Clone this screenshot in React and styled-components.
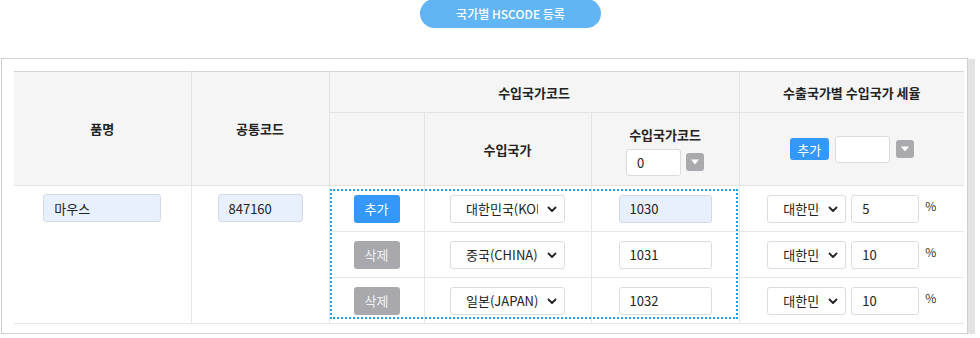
import React from 'react';
import styled, { createGlobalStyle } from 'styled-components';

const GlobalStyle = createGlobalStyle`
    body {
        margin: 0;
        background: #fff;
        font-family: "Noto Sans CJK KR", "Noto Sans", sans-serif;
        font-size: 13px;
        color: #222;
    }
`;

const TopBar = styled.div`
    display: flex;
    padding-left: 420px;
`;

const PillButton = styled.button`
    width: 181px;
    height: 29px;
    border: none;
    border-radius: 15px;
    margin-top: -1px;
    background: #62b5f5;
    color: #fff;
    font-family: inherit;
    font-size: 12px;
    font-weight: 500;
    line-height: 29px;
    padding: 0;
`;

const Box = styled.div`
    box-sizing: border-box;
    margin: 30px 0 0 1px;
    width: 967px;
    border: 1px solid #cfcfcf;
    box-shadow: 4px 4px 0 3px #e3e3e3;
    padding: 12px 0 9px 12px;
    background: #fff;
`;

const TableWrap = styled.div`
    position: relative;
    width: 950px;
`;

const Table = styled.table`
    width: 950px;
    table-layout: fixed;
    border-collapse: collapse;
    border-top: 1px solid #d3d3d3;
    border-bottom: 1px solid #e3e3e3;
`;

const Th = styled.th`
    background: #f5f5f5;
    font-weight: bold;
    font-size: 13px;
    color: #222;
    border: 1px solid #e3e3e3;
    border-top: none;
    height: ${p => p.$h || 40}px;
    padding: 0;
    vertical-align: middle;
    &:first-child { border-left: none; }
    &:last-child { border-right: none; }
`;

const Td = styled.td`
    border: 1px solid #e6e6e6;
    height: ${p => p.$h || 45}px;
    padding: ${p => (p.$top ? '8px 0 0' : '0')};
    vertical-align: ${p => (p.$top ? 'top' : 'middle')};
    text-align: center;
    &.first { border-left: none; }
    &.last { border-right: none; }
`;

const Center = styled.div`
    display: flex;
    justify-content: center;
    align-items: center;
    gap: ${p => p.$gap || 5}px;
`;

const HeadStack = styled.div`
    display: flex;
    flex-direction: column;
    align-items: center;
    gap: 5px;
    padding-top: 2px;
`;

const Input = styled.input`
    box-sizing: border-box;
    width: ${p => p.$w}px;
    height: ${p => p.$hh || 28}px;
    border: 1px solid ${p => (p.$filled ? '#d3dae6' : '#dcdcdc')};
    border-radius: 3px;
    background: ${p => (p.$filled ? '#e8f0fe' : '#fff')};
    padding: 0 10px;
    font-family: inherit;
    font-size: 13px;
    color: #222;
    outline: none;
`;

const Btn = styled.button`
    width: ${p => p.$w || 46}px;
    height: ${p => p.$hh || 28}px;
    border: none;
    border-radius: 3px;
    background: ${p => (p.$gray ? '#a8a8ad' : '#3498fb')};
    color: ${p => (p.$gray ? '#f2f2f2' : '#fff')};
    font-family: inherit;
    font-size: 13px;
    padding: 0;
`;

const DropSquare = styled.span`
    display: inline-flex;
    justify-content: center;
    align-items: center;
    width: 18px;
    height: 18px;
    border-radius: 3px;
    background: #a9a9ae;
`;

const SelectBox = styled.div`
    box-sizing: border-box;
    display: flex;
    align-items: center;
    width: ${p => p.$w}px;
    height: 28px;
    border: 1px solid #dcdcdc;
    border-radius: 3px;
    background: #fff;
    padding: 0 7px 0 15px;
    gap: ${p => p.$gap}px;
`;

const Select = styled.select`
    appearance: none;
    flex: 1;
    min-width: 0;
    border: none;
    background: transparent;
    font-family: inherit;
    font-size: 13px;
    color: #222;
    padding: 0;
    outline: none;
`;

const Percent = styled.span`
    font-size: 12px;
    color: #333;
    margin-left: 1px;
    align-self: flex-start;
    margin-top: 2px;
`;

const DottedFrame = styled.div`
    position: absolute;
    left: 316px;
    top: 118px;
    width: 408px;
    height: 130px;
    box-sizing: border-box;
    border: 2px dotted #1ea0e6;
    pointer-events: none;
`;

const Chevron = () => (
    <svg width="10" height="10" viewBox="0 0 10 10">
        <path d="M1.5 3.5 L5 7 L8.5 3.5" fill="none" stroke="#222" strokeWidth="1.8" strokeLinecap="round" strokeLinejoin="round" />
    </svg>
);

const Triangle = () => (
    <svg width="10" height="8" viewBox="0 0 10 8">
        <path d="M1 1.5 H9 L5 6.5 Z" fill="#fff" />
    </svg>
);

const CountrySelect = ({ w, gap, label }) => (
    <SelectBox $w={w} $gap={gap}>
        <Select defaultValue={label}>
            <option>{label}</option>
        </Select>
        <Chevron />
    </SelectBox>
);

const rows = [
    { action: '추가', country: '대한민국(KOREA)', code: '1030', rate: '5', filled: true },
    { action: '삭제', country: '중국(CHINA)', code: '1031', rate: '10' },
    { action: '삭제', country: '일본(JAPAN)', code: '1032', rate: '10' },
];

export default function App() {
    return (
        <>
            <GlobalStyle />
            <TopBar>
                <PillButton>국가별 HSCODE 등록</PillButton>
            </TopBar>
            <Box>
                <TableWrap>
                    <Table>
                        <colgroup>
                            <col style={{ width: 177 }} />
                            <col style={{ width: 138 }} />
                            <col style={{ width: 95 }} />
                            <col style={{ width: 167 }} />
                            <col style={{ width: 148 }} />
                            <col style={{ width: 225 }} />
                        </colgroup>
                        <thead>
                            <tr>
                                <Th rowSpan={2}>품명</Th>
                                <Th rowSpan={2}>공통코드</Th>
                                <Th colSpan={3} $h={40}>수입국가코드</Th>
                                <Th $h={40}>수출국가별 수입국가 세율</Th>
                            </tr>
                            <tr>
                                <Th $h={72} style={{ borderLeft: '1px solid #e3e3e3' }} />
                                <Th $h={72}>수입국가</Th>
                                <Th $h={72}>
                                    <HeadStack>
                                        <span>수입국가코드</span>
                                        <Center $gap={5}>
                                            <Input $w={55} $hh={27} defaultValue="0" />
                                            <DropSquare><Triangle /></DropSquare>
                                        </Center>
                                    </HeadStack>
                                </Th>
                                <Th $h={72} style={{ borderRight: 'none' }}>
                                    <Center $gap={6}>
                                        <Btn $w={39} $hh={22}>추가</Btn>
                                        <Input $w={55} $hh={27} defaultValue="" />
                                        <DropSquare><Triangle /></DropSquare>
                                    </Center>
                                </Th>
                            </tr>
                        </thead>
                        <tbody>
                            {rows.map((r, i) => (
                                <tr key={r.code}>
                                    {i === 0 && (
                                        <>
                                            <Td rowSpan={3} $top className="first">
                                                <Center><Input $w={118} $filled defaultValue="마우스" /></Center>
                                            </Td>
                                            <Td rowSpan={3} $top>
                                                <Center><Input $w={85} $filled defaultValue="847160" /></Center>
                                            </Td>
                                        </>
                                    )}
                                    <Td $h={i === 1 ? 44 : 45}>
                                        <Center><Btn $gray={r.action === '삭제'}>{r.action}</Btn></Center>
                                    </Td>
                                    <Td>
                                        <Center><CountrySelect w={115} gap={9} label={r.country} /></Center>
                                    </Td>
                                    <Td>
                                        <Center><Input $w={93} $filled={r.filled} defaultValue={r.code} /></Center>
                                    </Td>
                                    <Td className="last">
                                        <Center $gap={5}>
                                            <CountrySelect w={79} gap={8} label="대한민국" />
                                            <Input $w={68} defaultValue={r.rate} />
                                            <Percent>%</Percent>
                                        </Center>
                                    </Td>
                                </tr>
                            ))}
                        </tbody>
                    </Table>
                    <DottedFrame />
                </TableWrap>
            </Box>
        </>
    );
}
